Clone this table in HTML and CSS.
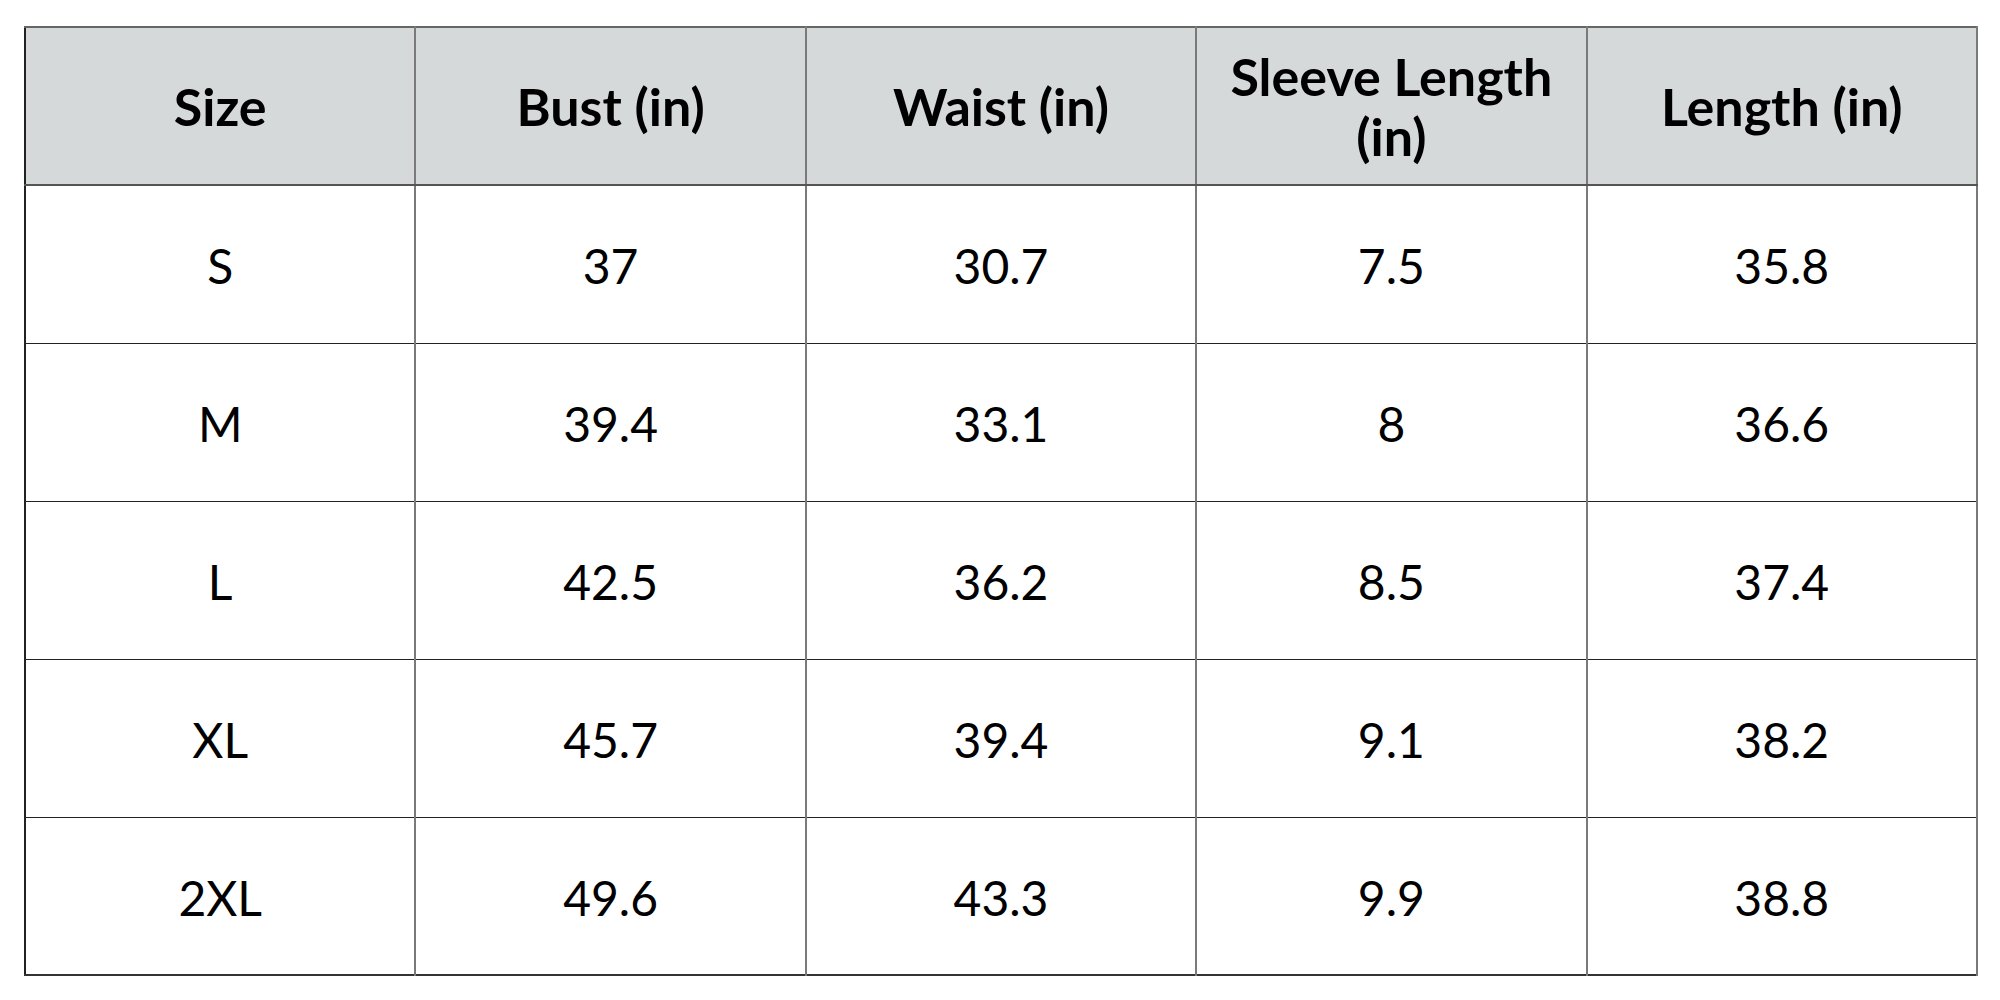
FILE: index.html
```html
<!DOCTYPE html>
<html>
<head>
<meta charset="utf-8">
<link rel="stylesheet" href="styles.css">
</head>
<body>
<div class="page">
<table class="chart">
<thead>
<tr><th>Size</th><th>Bust (in)</th><th>Waist (in)</th><th>Sleeve Length<br>(in)</th><th>Length (in)</th></tr>
</thead>
<tbody>
<tr><td>S</td><td>37</td><td>30.7</td><td>7.5</td><td>35.8</td></tr>
<tr><td>M</td><td>39.4</td><td>33.1</td><td>8</td><td>36.6</td></tr>
<tr><td>L</td><td>42.5</td><td>36.2</td><td>8.5</td><td>37.4</td></tr>
<tr><td>XL</td><td>45.7</td><td>39.4</td><td>9.1</td><td>38.2</td></tr>
<tr><td>2XL</td><td>49.6</td><td>43.3</td><td>9.9</td><td>38.8</td></tr>
</tbody>
</table>
</div>
</body>
</html>
```
FILE: styles.css
```css
html, body {
  margin: 0;
  padding: 0;
  background: #ffffff;
}
.page {
  padding: 26px 22px 0 24px;
}
.chart {
  width: 1954px;
  border-collapse: collapse;
  table-layout: fixed;
  font-family: "Lato", "Liberation Sans", sans-serif;
  color: #000;
  border-top: 2px solid #666;
  border-left: 2px solid #222;
  border-right: 2px solid #444;
  border-bottom: 2px solid #333;
}
.chart th, .chart td {
  height: 158px;
  padding: 0;
  text-align: center;
  vertical-align: middle;
  border-right: 2px solid #7a7a7a;
  border-bottom: 1px solid #222;
  box-sizing: border-box;
}
.chart th {
  background: #d5d9da;
  font-weight: 700;
  font-size: 52px;
  line-height: 60px;
  border-bottom: 2px solid #555;
}
.chart td {
  font-weight: 400;
  font-size: 48px;
  padding-top: 3px;
}
```
